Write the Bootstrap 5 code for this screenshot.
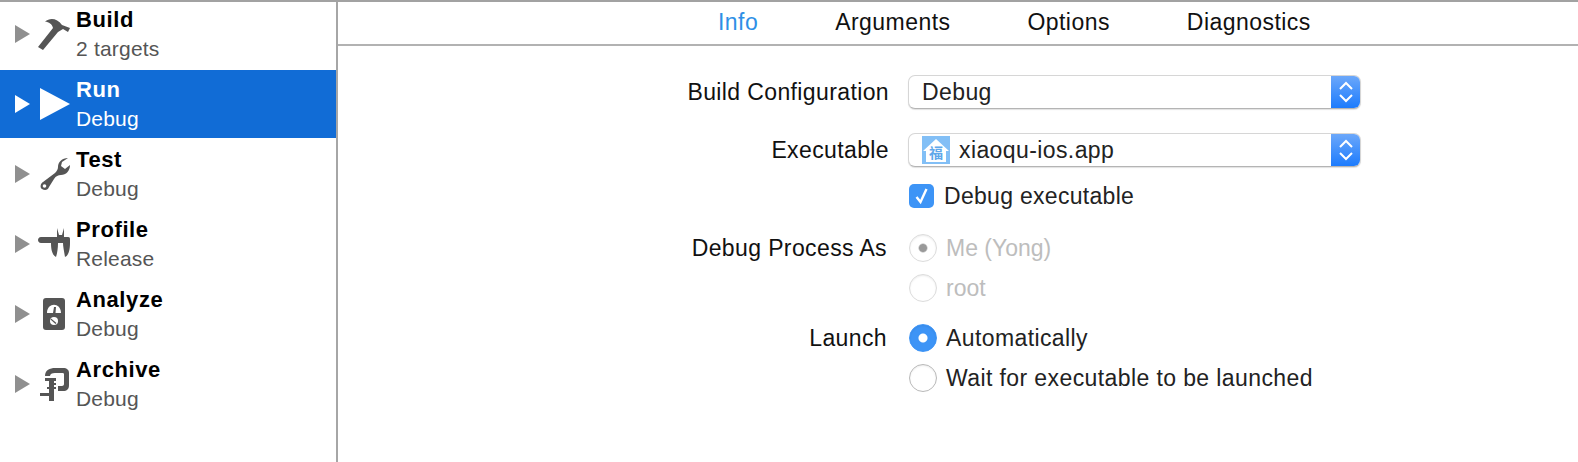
<!DOCTYPE html>
<html lang="en">
<head>
<meta charset="utf-8">
<title>Scheme editor</title>
<link href="https://cdn.jsdelivr.net/npm/bootstrap@5.3.0/dist/css/bootstrap.min.css" rel="stylesheet">
<style>
html,body{height:100%}
body{font-family:"Liberation Sans",Arial,sans-serif;font-size:23px;color:#111;background:#fff;border-top:2px solid #a2a2a2;overflow:hidden}
.shell{height:460px}
.side{width:338px;flex:none;border-right:2px solid #a6a6a6;margin-top:-2px;height:462px}
.srow{height:68px;margin-bottom:2px;padding-left:15px}
.srow.sel{background:#116cd6;color:#fff}
.srow svg{flex:none;display:block}
.tri{fill:#8f8f8f}
.sel .tri{fill:#fff}
.gly{margin-left:7px;margin-right:5px;fill:#555}
.stext{padding-bottom:7px}
.sname{font-weight:700;font-size:22px;line-height:24px;color:#000;padding-top:8px;letter-spacing:.6px}
.ssub{font-size:21px;line-height:24px;margin-top:5px;color:#555;letter-spacing:.2px}
.sel .sname,.sel .ssub{color:#fff}
.pane{min-width:0}
.tabbar{height:42px;box-sizing:content-box;border-bottom:2px solid #b2b2b2;padding-left:380px;gap:77px}
.tabbar .nav-link{padding:0;line-height:41px;color:#111;font-size:23px;letter-spacing:.45px}
.tabbar .nav-link.active{color:#2e8fe6}
.fbody{padding-top:29px}
.flabel{width:551px;flex:none;text-align:right;line-height:28px;color:#111;letter-spacing:.38px}
.flabel.narrow{width:549px}
.picker{width:453px;height:34px;margin-left:19px;border:1px solid #d6d6d6;border-bottom:1px solid #b4b4b4;border-radius:7px;background:#fff;box-shadow:0 1px 1px rgba(0,0,0,.12);overflow:hidden;padding-left:13px;color:#222;letter-spacing:.4px}
.stepper{margin-left:auto;width:29px;height:34px;flex:none;background:linear-gradient(#6ea9fa,#1a7afd)}
.appico{width:28px;height:28px;flex:none;background:#82bff6;margin-right:9px}
.han{font-family:"Noto Sans CJK SC",sans-serif;font-size:14px;font-weight:700;fill:#5fa8ea}
.rowa{margin-top:24px;height:34px}
.rowb{margin-top:16px;height:26px;padding-left:572px}
.rowc{margin-top:24px;height:30px}
.rowd{margin-top:10px;height:30px;padding-left:571px}
.rowe{margin-top:20px;height:30px}
.opt{margin-left:22px}
.opt .form-check-input{margin:0;width:28px;height:28px;flex:none;border:1px solid #b9b9b9;box-shadow:inset 0 1px 2px rgba(0,0,0,.08);background-color:#fff;opacity:1}
.opt .form-check-input:focus{box-shadow:none}
.opt .form-check-input[type=radio]:checked{border-color:#3d94f6;background:radial-gradient(circle,#fff 0,#fff 4px,#3d94f6 5px)}
.opt .form-check-input[type=radio]:disabled{border-color:#dcdcdc}
.opt .form-check-input[type=radio]:disabled:checked{border-color:#dcdcdc;background:radial-gradient(circle,#999 0,#999 3.5px,#fff 5px)}
.opt .form-check-label{opacity:1!important;margin-left:9px;line-height:28px;color:#222;letter-spacing:.4px}
.opt .form-check-input:disabled~.form-check-label{color:#bdbdbd;opacity:1;letter-spacing:0}
.cbx.form-check-input{margin:0 0 0 -1px;width:25px;height:24px;flex:none;border:0;border-radius:5px;background-color:#3d94f6;background-size:100% 100%;background-image:url("data:image/svg+xml,%3csvg xmlns='http://www.w3.org/2000/svg' viewBox='0 0 24 24'%3e%3cpath fill='none' stroke='%23fff' stroke-width='2.400' d='M7 13l4 5l6-13'/%3e%3c/svg%3e")}
.cbx-label{margin-left:10px;color:#222;line-height:26px;letter-spacing:.3px}
</style>
</head>
<body>
<div class="shell d-flex">
  <div class="side">
    <div class="srow d-flex align-items-center">
      <svg class="tri" width="15" height="18" viewBox="0 0 15 18"><path d="M0 0L15 9L0 18z"/></svg>
      <svg class="gly" width="34" height="34" viewBox="0 0 34 34"><path d="M8 4.500C13 .5 20 1 25 8L33 11L31 15L26 12L21 15L6 33L1 30L16 11C15 7 12 5 8 4.500z"/></svg>
      <div class="stext"><div class="sname">Build</div><div class="ssub">2 targets</div></div>
    </div>
    <div class="srow sel d-flex align-items-center">
      <svg class="tri" width="15" height="18" viewBox="0 0 15 18"><path d="M0 0L15 9L0 18z"/></svg>
      <svg class="gly" width="34" height="34" viewBox="0 0 34 34"><path fill="#fff" d="M3 1L33 17L3 33z"/></svg>
      <div class="stext"><div class="sname">Run</div><div class="ssub">Debug</div></div>
    </div>
    <div class="srow d-flex align-items-center">
      <svg class="tri" width="15" height="18" viewBox="0 0 15 18"><path d="M0 0L15 9L0 18z"/></svg>
      <svg class="gly" width="34" height="34" viewBox="0 0 34 34"><path d="M31 1C25 1 21 5 21 10C21 12 20 14 18 16L6 25C3 27 3 31 5 32C8 34 11 33 12 30L17 22C19 19 21 18 24 18C29 18 33 14 33 8L28 12L24 9L25 5z"/><circle cx="7.500" cy="29" r="1.800" fill="#fff"/></svg>
      <div class="stext"><div class="sname">Test</div><div class="ssub">Debug</div></div>
    </div>
    <div class="srow d-flex align-items-center">
      <svg class="tri" width="15" height="18" viewBox="0 0 15 18"><path d="M0 0L15 9L0 18z"/></svg>
      <svg class="gly" width="34" height="34" viewBox="0 0 34 34"><path d="M20 1L22 8L25 8L27 1L27 10L31 10C33 10 33 11 33 13L33 16C33 24 31 29 28 30C27 24 26 19 26 16L21 16C21 22 20 27 19 30C15 28 14 22 14 16L4 16C0 16 0 10 4 10L20 10z"/></svg>
      <div class="stext"><div class="sname">Profile</div><div class="ssub">Release</div></div>
    </div>
    <div class="srow d-flex align-items-center">
      <svg class="tri" width="15" height="18" viewBox="0 0 15 18"><path d="M0 0L15 9L0 18z"/></svg>
      <svg class="gly" width="34" height="34" viewBox="0 0 34 34"><rect x="6" y="1" width="22" height="32" rx="3"/><path fill="#fff" d="M10 16C10 5 24 5 24 16L18.500 16L19 10L17 10L16 16z"/><circle cx="17" cy="24" r="4" fill="#fff"/><path d="M14 21.500L19.500 26L18.500 27L13.500 22.500z"/></svg>
      <div class="stext"><div class="sname">Analyze</div><div class="ssub">Debug</div></div>
    </div>
    <div class="srow d-flex align-items-center">
      <svg class="tri" width="15" height="18" viewBox="0 0 15 18"><path d="M0 0L15 9L0 18z"/></svg>
      <svg class="gly" width="34" height="34" viewBox="0 0 34 34"><path d="M8 9C8 3 13 1 18 1L26 1C30 1 32 3 32 6L32 18C32 22 30 24 26 24L21 24L21 19L25 19C26 19 27 18 27 17L27 7C27 6 26 6 25 6L18 6C15 6 13 7 13 9z"/><path d="M8 11L19 11L19 14L17 14L17 16L19 16L19 18L17 18L17 20L19 20L19 22L17 22L17 26L17 34L12 34L12 29L3 29L3 26L12 26L12 22L10 22L10 20L12 20L12 14L8 14z"/></svg>
      <div class="stext"><div class="sname">Archive</div><div class="ssub">Debug</div></div>
    </div>
  </div>
  <div class="pane flex-grow-1">
    <nav class="nav tabbar">
      <a class="nav-link active" href="#">Info</a>
      <a class="nav-link" href="#">Arguments</a>
      <a class="nav-link" href="#">Options</a>
      <a class="nav-link" href="#">Diagnostics</a>
    </nav>
    <div class="fbody">
      <div class="d-flex align-items-center">
        <div class="flabel">Build Configuration</div>
        <div class="picker d-flex align-items-center">Debug
          <div class="stepper d-flex align-items-center justify-content-center"><svg width="16" height="22" viewBox="0 0 16 22" fill="none" stroke="#fff" stroke-width="2"><path d="M2 8L8 2L14 8M2 14L8 20L14 14"/></svg></div>
        </div>
      </div>
      <div class="d-flex align-items-center rowa">
        <div class="flabel">Executable</div>
        <div class="picker d-flex align-items-center">
          <svg class="appico" viewBox="0 0 28 28"><path fill="#fff" d="M14 3L27 15L24 15L24 26L4 26L4 15L1 15z"/><text class="han" x="7" y="22">福</text></svg>xiaoqu-ios.app
          <div class="stepper d-flex align-items-center justify-content-center"><svg width="16" height="22" viewBox="0 0 16 22" fill="none" stroke="#fff" stroke-width="2"><path d="M2 8L8 2L14 8M2 14L8 20L14 14"/></svg></div>
        </div>
      </div>
      <div class="d-flex align-items-center rowb">
        <input class="form-check-input cbx" type="checkbox" id="dbg" checked>
        <label class="cbx-label" for="dbg">Debug executable</label>
      </div>
      <div class="d-flex align-items-center rowc">
        <div class="flabel narrow">Debug Process As</div>
        <div class="opt d-flex align-items-center"><input class="form-check-input" type="radio" name="who" id="me" checked disabled><label class="form-check-label" for="me">Me (Yong)</label></div>
      </div>
      <div class="d-flex align-items-center rowd">
        <div class="opt d-flex align-items-center ms-0"><input class="form-check-input" type="radio" name="who" id="root" disabled><label class="form-check-label" for="root">root</label></div>
      </div>
      <div class="d-flex align-items-center rowe">
        <div class="flabel narrow">Launch</div>
        <div class="opt d-flex align-items-center"><input class="form-check-input" type="radio" name="launch" id="auto" checked><label class="form-check-label" for="auto">Automatically</label></div>
      </div>
      <div class="d-flex align-items-center rowd">
        <div class="opt d-flex align-items-center ms-0"><input class="form-check-input" type="radio" name="launch" id="wait"><label class="form-check-label" for="wait">Wait for executable to be launched</label></div>
      </div>
    </div>
  </div>
</div>
<script src="https://cdn.jsdelivr.net/npm/bootstrap@5.3.0/dist/js/bootstrap.bundle.min.js"></script>
</body>
</html>
